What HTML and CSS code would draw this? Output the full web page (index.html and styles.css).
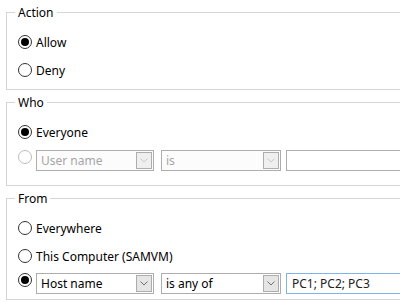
FILE: index.html
```html
<!DOCTYPE html>
<html>
<head>
<meta charset="utf-8">
<link rel="stylesheet" href="styles.css">
</head>
<body>
<fieldset class="group">
  <legend>Action</legend>
  <div class="opt"><span class="radio on"></span><span>Allow</span></div>
  <div class="opt"><span class="radio"></span><span>Deny</span></div>
</fieldset>
<fieldset class="group who">
  <legend>Who</legend>
  <div class="opt"><span class="radio on"></span><span>Everyone</span></div>
  <div class="crow">
    <span class="radio dis"></span>
    <div class="combo dis c1"><span class="val">User name</span><span class="btn"><svg width="8" height="5" viewBox="0 0 8 5"><polyline points="0.5,0.5 4,4 7.5,0.5" fill="none" stroke="currentColor" stroke-width="1"/></svg></span></div>
    <div class="combo dis c2"><span class="val">is</span><span class="btn"><svg width="8" height="5" viewBox="0 0 8 5"><polyline points="0.5,0.5 4,4 7.5,0.5" fill="none" stroke="currentColor" stroke-width="1"/></svg></span></div>
    <div class="tbox dis"></div>
  </div>
</fieldset>
<fieldset class="group from">
  <legend>From</legend>
  <div class="opt"><span class="radio"></span><span>Everywhere</span></div>
  <div class="opt"><span class="radio"></span><span>This Computer (SAMVM)</span></div>
  <div class="crow">
    <span class="radio on"></span>
    <div class="combo c1"><span class="val">Host name</span><span class="btn"><svg width="8" height="5" viewBox="0 0 8 5"><polyline points="0.5,0.5 4,4 7.5,0.5" fill="none" stroke="currentColor" stroke-width="1"/></svg></span></div>
    <div class="combo c2"><span class="val">is any of</span><span class="btn"><svg width="8" height="5" viewBox="0 0 8 5"><polyline points="0.5,0.5 4,4 7.5,0.5" fill="none" stroke="currentColor" stroke-width="1"/></svg></span></div>
    <div class="tbox focus"><span class="val">PC1; PC2; PC3</span></div>
  </div>
</fieldset>
</body>
</html>
```
FILE: styles.css
```css
html, body {
  margin: 0;
  overflow: hidden;
  background: #fff;
}
body {
  width: 400px;
  height: 303px;
  box-sizing: border-box;
  padding: 3px 0 0 6px;
  font-family: "Noto Sans", "Liberation Sans", sans-serif;
  font-size: 12px;
  color: #000;
}
.group {
  width: 394px;
  min-width: 0;
  box-sizing: border-box;
  margin: 0 0 3px 0;
  padding: 7px 0 5px 8px;
  border: 1px solid #d5d5d5;
  border-right: none;
}
.group legend {
  padding: 2px 3px 0;
  line-height: 16px;
}
.who {
  padding-bottom: 14px;
}
.opt {
  display: flex;
  align-items: center;
  height: 28px;
  margin-left: 3px;
}
.radio {
  flex: none;
  width: 14px;
  height: 14px;
  box-sizing: border-box;
  border: 1px solid #333;
  border-radius: 50%;
  margin-right: 4px;
  display: flex;
  align-items: center;
  justify-content: center;
  background: #fff;
}
.radio.on::after {
  content: "";
  width: 8px;
  height: 8px;
  border-radius: 50%;
  background: #000;
}
.radio.dis {
  border-color: #bcbcbc;
}
.crow {
  display: flex;
  align-items: flex-start;
  margin: 4px 0 0 3px;
}
.from .crow {
  margin-top: 3px;
}
.combo {
  flex: none;
  height: 21px;
  box-sizing: border-box;
  border: 1px solid #adadad;
  display: flex;
  align-items: center;
  padding-left: 4px;
  background: #fff;
}
.c1 {
  width: 118px;
  margin-right: 7px;
}
.c2 {
  width: 120px;
  margin-right: 5px;
}
.val {
  white-space: nowrap;
}
.combo .btn {
  margin: 0 1px 0 auto;
  width: 16px;
  height: 17px;
  box-sizing: border-box;
  border: 1px solid #adadad;
  background: #e5e5e5;
  color: #707070;
  display: flex;
  align-items: center;
  justify-content: center;
}
.combo.dis {
  color: #a6a6a6;
  background: #fcfcfc;
}
.combo.dis .btn {
  background: #efefef;
  color: #c6c6c6;
}
.tbox {
  flex: 1;
  min-width: 0;
  height: 21px;
  box-sizing: border-box;
  border: 1px solid #adadad;
  border-right: none;
  display: flex;
  align-items: center;
  padding-left: 5px;
  color: #222;
  overflow: hidden;
}
.tbox.focus {
  border-color: #7eb4ea;
}
```
